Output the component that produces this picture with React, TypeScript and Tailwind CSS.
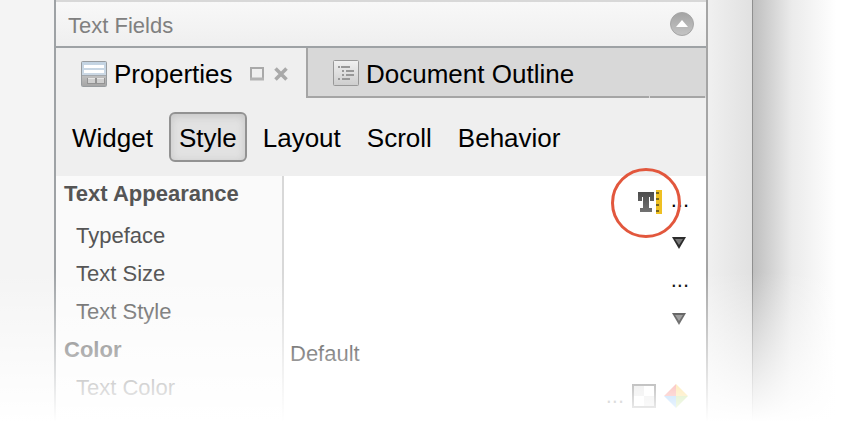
import type { ReactNode } from "react";

function FormIcon() {
  return (
    <svg width="26" height="26" viewBox="0 0 26 26" aria-hidden="true" className="shrink-0">
      <defs>
        <linearGradient id="formTop" x1="0" y1="0" x2="0" y2="1">
          <stop offset="0" stopColor="#c3d3e2" />
          <stop offset="1" stopColor="#d3dee8" />
        </linearGradient>
        <linearGradient id="formBottom" x1="0" y1="0" x2="0" y2="1">
          <stop offset="0" stopColor="#bfbfbf" />
          <stop offset="1" stopColor="#a6a6a6" />
        </linearGradient>
      </defs>
      <rect x="0.5" y="0.5" width="25" height="25" rx="1" fill="url(#formTop)" />
      <rect x="1" y="15" width="24" height="10" fill="url(#formBottom)" />
      <path d="M1 14.5H25" stroke="#a3a8ad" />
      <rect x="3" y="4" width="20" height="3" fill="#fff" />
      <rect x="3" y="9" width="20" height="3" fill="#fff" />
      <rect x="6.5" y="17.5" width="8" height="5" fill="#cfcfcf" stroke="#939393" />
      <rect x="15.5" y="17.5" width="8" height="5" fill="#cfcfcf" stroke="#939393" />
      <path d="M7 17.5H14M16 17.5H23" stroke="#e6e6e6" />
      <rect x="0.5" y="0.5" width="25" height="25" rx="1" fill="none" stroke="#989c9f" />
    </svg>
  );
}

function OutlineIcon() {
  return (
    <svg width="26" height="26" viewBox="0 0 26 26" aria-hidden="true" className="shrink-0">
      <defs>
        <linearGradient id="outlineBg" x1="0" y1="0" x2="0" y2="1">
          <stop offset="0" stopColor="#f0f0f0" />
          <stop offset="1" stopColor="#cdcdcd" />
        </linearGradient>
      </defs>
      <rect x="0.5" y="0.5" width="25" height="25" rx="1" fill="url(#outlineBg)" stroke="#989898" />
      <path
        d="M5 7H7M8 7H17M9 11H11M13 11H21M9 15H11M13 15H21M5 19H7M9 19H17"
        stroke="#989898"
        strokeWidth="2"
      />
    </svg>
  );
}

function TextRulerIcon() {
  return (
    <svg width="24" height="24" viewBox="0 0 24 24" aria-hidden="true">
      <defs>
        <linearGradient id="tFill" x1="0" y1="0" x2="0" y2="1">
          <stop offset="0" stopColor="#4c4c4c" />
          <stop offset="1" stopColor="#727272" />
        </linearGradient>
      </defs>
      <path d="M0 2H16V11H12V7H11V18H14V22H2V18H5V7H4V11H0Z" fill="url(#tFill)" />
      <rect x="18" y="0" width="6" height="24" fill="#efc022" />
      <path d="M18 3H21M18 9H21M18 15H21M18 21H21" stroke="#77651c" strokeWidth="2" />
    </svg>
  );
}

function Ellipsis({ label }: { label: string }) {
  return (
    <button type="button" aria-label={label} className="leading-6 text-black">
      ...
    </button>
  );
}

function ChoiceCell({ label }: { label: string }) {
  return (
    <div className="relative flex h-[38px] items-center justify-end pt-3.5 pr-5">
      <select
        aria-label={label}
        defaultValue=""
        className="absolute inset-0 w-full appearance-none bg-transparent"
      >
        <option value="" />
      </select>
      <svg width="14" height="12" viewBox="0 0 14 12" aria-hidden="true" className="pointer-events-none relative">
        <path d="M0 0H14L7 12Z" fill="#2c2c2c" />
        <path d="M3 2H11L7 8Z" fill="#777" />
      </svg>
    </div>
  );
}

function PropertyRow({ name, children }: { name: string; children?: ReactNode }) {
  return (
    <tr>
      <th
        scope="row"
        className="h-[38px] border-r-2 border-[#d8d8d8] bg-[#fafafa] p-0 pl-5 text-left font-normal"
      >
        {name}
      </th>
      <td className="p-0">{children}</td>
    </tr>
  );
}

const categories = ["Widget", "Style", "Layout", "Scroll", "Behavior"];

export default function App() {
  return (
    <div className="relative flex w-full bg-white font-['Liberation_Sans',Arial,sans-serif]">
      <div className="w-[54px] shrink-0 bg-[#f4f4f4]" />

      <main className="min-w-0 flex-1 border-r-2 border-l-2 border-r-[#a5a5a5] border-l-[#9ea2a5] bg-white">
        <header className="flex h-12 items-center justify-between border-t-2 border-b-2 border-t-[#d8d8d8] border-b-[#9ea2a5] bg-linear-to-b from-[#f8f8f8] to-[#efefef] pr-3 pl-3 text-[22px] text-[#808080]">
          <h2 className="pt-0.5">Text Fields</h2>
          <button type="button" aria-label="Collapse text fields">
            <svg width="24" height="24" viewBox="0 0 24 24" aria-hidden="true">
              <defs>
                <linearGradient id="knob" x1="0" y1="0" x2="0" y2="1">
                  <stop offset="0" stopColor="#a4a4a4" />
                  <stop offset="1" stopColor="#c4c4c4" />
                </linearGradient>
              </defs>
              <circle cx="12" cy="12" r="11.5" fill="url(#knob)" stroke="#a6a6a6" />
              <path d="M6 15L12 8L18 15Z" fill="#fff" />
            </svg>
          </button>
        </header>

        <div role="tablist" className="flex h-[50px] bg-[#efefef] text-[26px] text-black">
          <div className="flex w-[250px] shrink-0 items-center pt-0.5 pl-[25px]">
            <button type="button" role="tab" aria-selected="true" className="flex items-center gap-[7px]">
              <FormIcon />
              Properties
            </button>
            <button type="button" aria-label="Maximize" className="ml-[17px]">
              <svg width="14" height="14" viewBox="0 0 14 14" aria-hidden="true">
                <path d="M1 1H13V12H1Z" fill="none" stroke="#a9a9a9" strokeWidth="2" />
                <path d="M0 12H14" stroke="#b3b3b3" strokeWidth="3" />
              </svg>
            </button>
            <button type="button" aria-label="Close" className="ml-[10px]">
              <svg width="14" height="14" viewBox="0 0 14 14" aria-hidden="true">
                <path d="M1.5 1.5L12.5 12.5M12.5 1.5L1.5 12.5" stroke="#a9a9a9" strokeWidth="3.6" />
              </svg>
            </button>
          </div>
          <div className="flex flex-1 border-l-2 border-[#a5a5a5] bg-[#d8d8d8]">
            <button
              type="button"
              role="tab"
              aria-selected="false"
              className="flex w-[341px] items-center gap-[7px] border-b-2 border-[#a5a5a5] pt-0.5 pl-[25px]"
            >
              <OutlineIcon />
              <span className="pt-0.5">Document Outline</span>
            </button>
            <div className="mr-px ml-px flex-1 border-b-2 border-[#a5a5a5]" />
          </div>
        </div>

        <nav className="flex h-[78px] items-center gap-1.5 bg-[#efefef] px-1.5 text-[26px] text-black">
          {categories.map((category) => (
            <button
              key={category}
              type="button"
              aria-pressed={category === "Style"}
              className="h-[50px] rounded-md border-2 border-transparent px-2 pt-0.5 aria-pressed:border-[#929292] aria-pressed:bg-[#e2e2e2] aria-pressed:shadow-[inset_0_2px_8px_#c4c4c4]"
            >
              {category}
            </button>
          ))}
        </nav>

        <table className="w-full table-fixed border-separate border-spacing-0 text-[22px] leading-6 text-[#555]">
          <colgroup>
            <col className="w-[228px]" />
            <col />
          </colgroup>
          <tbody>
            <tr>
              <th
                scope="row"
                className="h-[41px] border-r-2 border-[#d8d8d8] bg-[#fafafa] p-0 pb-1.5 pl-2 text-left font-bold"
              >
                Text Appearance
              </th>
              <td className="p-0">
                <div className="flex h-[41px] items-start justify-end gap-[9px] pr-[17px]">
                  <span className="pt-3.5">
                    <TextRulerIcon />
                  </span>
                  <span className="pt-3">
                    <Ellipsis label="Edit text appearance" />
                  </span>
                </div>
              </td>
            </tr>
            <PropertyRow name="Typeface">
              <ChoiceCell label="Typeface" />
            </PropertyRow>
            <PropertyRow name="Text Size">
              <div className="flex h-[38px] items-center justify-end pt-3 pr-[17px]">
                <Ellipsis label="Edit text size" />
              </div>
            </PropertyRow>
            <PropertyRow name="Text Style">
              <ChoiceCell label="Text Style" />
            </PropertyRow>
            <tr>
              <th
                scope="row"
                className="h-[38px] border-r-2 border-[#d8d8d8] bg-[#fafafa] p-0 pl-2 text-left font-bold"
              >
                Color
              </th>
              <td className="p-0 pt-2 pl-1.5 text-black">Default</td>
            </tr>
            <PropertyRow name="Text Color">
              <div className="flex h-[38px] items-center justify-end gap-2 pt-4 pr-[18px]">
                <Ellipsis label="Edit text color" />
                <button type="button" aria-label="Transparent">
                  <svg width="24" height="24" viewBox="0 0 24 24" aria-hidden="true">
                    <rect x="1" y="1" width="22" height="22" fill="#fff" stroke="#111" strokeWidth="2" />
                    <path d="M2 2H12V12H2ZM12 12H22V22H12Z" fill="#ccc" />
                  </svg>
                </button>
                <button type="button" aria-label="Theme color">
                  <svg width="24" height="24" viewBox="0 0 24 24" aria-hidden="true">
                    <path d="M12 0V12H0Z" fill="#f02a1c" />
                    <path d="M12 0L24 12H12Z" fill="#fbb80c" />
                    <path d="M0 12H12V24Z" fill="#1f8af5" />
                    <path d="M12 12H24L12 24Z" fill="#7cc01f" />
                  </svg>
                </button>
              </div>
            </PropertyRow>
            <tr>
              <td className="h-[15px] border-r-2 border-[#d8d8d8] bg-[#fafafa] p-0" />
              <td className="p-0" />
            </tr>
          </tbody>
        </table>
      </main>

      <div className="w-[45px] shrink-0 border-r border-[#8f8f8f] bg-linear-to-r from-[#f0f0f0] to-[#e1e1e1]" />
      <div className="w-[111px] shrink-0 bg-linear-to-r from-[#bfbfbf] via-[#ebebeb] via-35% to-white to-75%" />

      <div className="pointer-events-none absolute inset-x-0 bottom-0 h-[150px] bg-linear-to-b from-white/0 to-white" />
      <svg
        width="70"
        height="70"
        viewBox="0 0 70 70"
        aria-hidden="true"
        className="pointer-events-none absolute top-[168px] right-[183px]"
      >
        <circle cx="35" cy="35" r="33.5" fill="none" stroke="#e2573d" strokeWidth="3" />
      </svg>
    </div>
  );
}
